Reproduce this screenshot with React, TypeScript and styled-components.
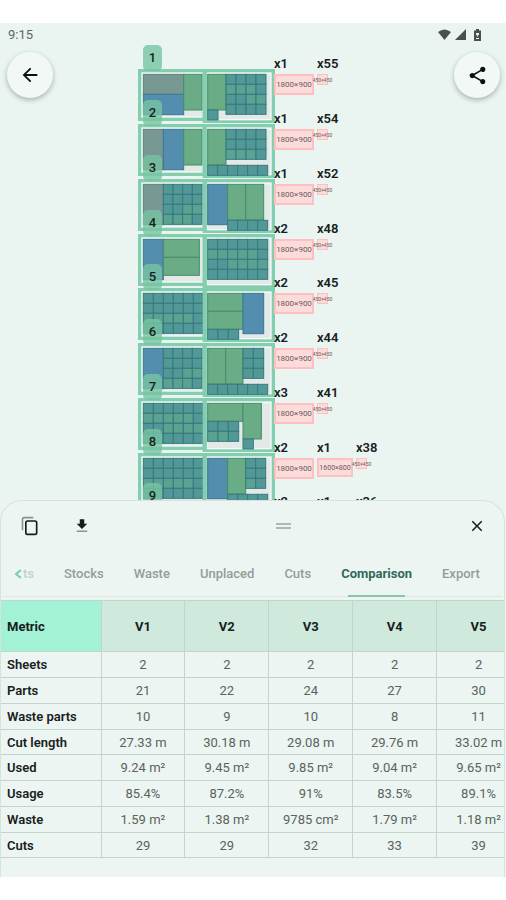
import React from "react";
import styled, { createGlobalStyle } from "styled-components";
import { MdArrowBack, MdClose, MdShare } from "react-icons/md";

const GlobalStyle = createGlobalStyle`
  * { box-sizing: border-box; }
  body { margin: 0; background: #ffffff; }
  button { font: inherit; border: 0; padding: 0; background: none; color: inherit; cursor: pointer; }
`;

const Page = styled.div`
  height: 100vh;
  padding: 23px 0;
  font-family: Roboto, "Liberation Sans", sans-serif;
  font-size: 13px;
  color: #17211d;
`;

const Screen = styled.main`
  height: 100%;
  display: flex;
  flex-direction: column;
  background: #eaf4f0;
  overflow: hidden;
`;

const Workspace = styled.section`
  flex: 1;
  min-height: 0;
  overflow: hidden;
`;

const StatusBar = styled.div`
  display: flex;
  justify-content: space-between;
  align-items: center;
  height: 23px;
  padding: 0 23px 0 8px;
  color: #5f6764;
`;

const StatusIcons = styled.div`
  display: flex;
  align-items: center;
  gap: 4px;
  color: #4b504e;
`;

const Board = styled.div`
  display: grid;
  grid-template-columns: 1fr 230px 1fr;
  align-items: start;
  padding-top: 11px;
`;

const RoundButton = styled.button<{ $end?: boolean }>`
  display: flex;
  align-items: center;
  justify-content: center;
  justify-self: ${(p) => (p.$end ? "end" : "start")};
  width: 46px;
  height: 46px;
  margin: -5px 6px 0 7px;
  border-radius: 50%;
  background: #f2f8f5;
  color: #0b0f0d;
  box-shadow: 0 2px 5px rgba(40, 60, 50, 0.35);
`;

const VariantList = styled.ol`
  list-style: none;
  margin: 0;
  padding: 0;
`;

const Variant = styled.li`
  position: relative;
  display: flex;
  align-items: flex-start;
  height: 55px;
  &:nth-child(4n) { height: 54px; }
`;

const Badge = styled.span`
  position: absolute;
  left: 5px;
  top: -12px;
  width: 19px;
  height: 26px;
  border-radius: 5px;
  background: rgba(119, 196, 162, 0.8);
  line-height: 26px;
  text-align: center;
  font-weight: 500;
`;

const Sheets = styled.svg`
  flex: none;
  display: block;
  width: 137px;
  height: 54px;
  margin-top: 12px;
`;

const Offcuts = styled.div`
  position: relative;
  display: flex;
  gap: 3px;
  margin-left: -1px;
`;

type Size = "large" | "medium" | "small";
const offcutSizes = {
  large: { w: 40, h: 21, font: 8 },
  medium: { w: 36, h: 19, font: 7 },
  small: { w: 11, h: 11, font: 5 },
};

const Offcut = styled.div<{ $size: Size }>`
  width: ${(p) => offcutSizes[p.$size].w}px;
  white-space: nowrap;
`;

const Count = styled.div`
  height: 13px;
  margin-bottom: 4px;
  line-height: 13px;
  font-weight: 600;
`;

const Piece = styled.div<{ $size: Size }>`
  display: flex;
  align-items: center;
  justify-content: center;
  height: ${(p) => offcutSizes[p.$size].h}px;
  border: ${(p) => (p.$size === "small" ? 1 : 2)}px solid #fdbfc0;
  background: #fbdcda;
  color: #6d5a5a;
  font-size: ${(p) => offcutSizes[p.$size].font}px;
`;

const Sheet = styled.section`
  position: relative;
  flex: none;
  margin: 0 1px 0 0;
  padding-bottom: 19px;
  border: 1px solid #d5e3dd;
  border-bottom: 0;
  border-radius: 22px 22px 0 0;
  background: #ecf5f1;
  overflow: hidden;
`;

const Toolbar = styled.div`
  display: grid;
  grid-template-columns: 1fr auto 1fr;
  align-items: center;
  height: 50px;
  padding: 0 17px 0 19px;
`;

const ToolGroup = styled.div<{ $end?: boolean }>`
  display: flex;
  gap: 32px;
  justify-content: ${(p) => (p.$end ? "flex-end" : "flex-start")};
`;

const ToolButton = styled.button`
  display: flex;
  align-items: center;
  justify-content: center;
  width: 20px;
  height: 20px;
  color: #161c19;
`;

const Handle = styled.div`
  width: 15px;
  height: 6px;
  margin-left: 60px;
  border: solid #aeb8b4;
  border-width: 2px 0;
`;

const Tabs = styled.nav`
  display: flex;
  gap: 30px;
  height: 46px;
  padding-left: 11px;
  margin: 0 2px;
  border-bottom: 1px solid #dae6e1;
  white-space: nowrap;
`;

const Tab = styled.button<{ $active?: boolean }>`
  position: relative;
  height: 46px;
  padding-bottom: 1px;
  font-weight: ${(p) => (p.$active ? 700 : 500)};
  color: ${(p) => (p.$active ? "#30695a" : "#929d99")};
  &::after {
    content: "";
    display: ${(p) => (p.$active ? "block" : "none")};
    position: absolute;
    left: 7px;
    right: 7px;
    bottom: 0;
    height: 2px;
    background: #83c8ac;
  }
`;

const ScrollTab = styled(Tab)`
  display: flex;
  align-items: center;
  gap: 1px;
  width: 20px;
  color: #c0d3cb;
`;

const TableWrap = styled.div`
  margin-top: 3px;
  overflow: hidden;
`;

const Table = styled.table`
  width: calc(100% + 17px);
  table-layout: fixed;
  border-collapse: collapse;
  thead tr { height: 51px; }
  tbody tr { height: 26px; }
  tbody tr:nth-child(4n) { height: 25px; }
  th, td {
    padding: 0;
    border: 1px solid #c2d4cc;
    text-align: center;
    line-height: 15px;
    white-space: nowrap;
  }
  th:first-child, td:first-child { border-left: 0; }
`;

const MetricCol = styled.col`
  width: 100px;
`;

const HeadCell = styled.th<{ $metric?: boolean }>`
  background: ${(p) => (p.$metric ? "#a3f2d5" : "#cfe9dc")};
  font-weight: 700;
  && {
    text-align: ${(p) => (p.$metric ? "left" : "center")};
    padding-left: ${(p) => (p.$metric ? 6 : 0)}px;
  }
`;

const RowLabel = styled.th`
  font-weight: 600;
  && {
    text-align: left;
    padding-left: 6px;
  }
`;

const Value = styled.td`
  color: #59635f;
`;

/* Cutting layouts. Shapes are [kind, x, y, width, height]; grids are ["t", x, y, columns, rows, cell width]. */
type Shape = ["a" | "b" | "g", number, number, number, number] | ["t", number, number, number, number, number];
const tones = { a: "#789893", b: "#538eae", g: "#69ac85" };
const edges = { a: "#5d7f7c", b: "#3b7796", g: "#478d6d" };
const full: Shape = ["t", 16, 16, 6, 4, 30];
const layouts: Shape[][] = [
  [["a", 16, 16, 121, 60], ["b", 16, 76, 121, 61], ["g", 137, 16, 55, 107], ["g", 209, 16, 55, 107], ["t", 264, 16, 4, 4, 30], ["t", 209, 123, 1, 1, 31]],
  [["a", 16, 16, 60, 121], ["b", 76, 16, 61, 121], ["g", 137, 16, 55, 107], ["g", 209, 16, 55, 107], ["t", 264, 16, 4, 3, 30], ["t", 209, 124, 6, 1, 30]],
  [["a", 16, 16, 60, 121], ["t", 76, 16, 4, 4, 29], ["b", 209, 16, 60, 121], ["g", 269, 16, 54, 107], ["g", 323, 16, 54, 107], ["t", 269, 124, 4, 1, 30]],
  [["b", 16, 16, 60, 121], ["g", 76, 16, 108, 54], ["g", 76, 70, 108, 54], ["t", 209, 16, 6, 4, 30]],
  [full, ["g", 209, 16, 106, 54], ["g", 209, 70, 106, 54], ["b", 315, 16, 62, 121], ["t", 209, 124, 3, 1, 31]],
  [["b", 16, 16, 60, 121], ["t", 76, 16, 4, 4, 29], ["g", 209, 16, 54, 107], ["g", 263, 16, 52, 107], ["t", 315, 16, 2, 3, 31], ["t", 209, 124, 6, 1, 30]],
  [full, ["g", 209, 16, 106, 54], ["g", 315, 16, 55, 107], ["t", 209, 70, 3, 2, 31], ["t", 315, 123, 1, 1, 31]],
  [full, ["b", 209, 16, 60, 121], ["g", 269, 16, 54, 107], ["t", 323, 16, 2, 3, 30], ["t", 269, 124, 4, 1, 30]],
];

function Shapes({ shape, seed }: { shape: Shape; seed: number }) {
  if (shape[0] !== "t") {
    const [kind, x, y, w, h] = shape;
    return <rect x={x} y={y} width={w} height={h} fill={tones[kind]} stroke={edges[kind]} strokeWidth={3} />;
  }
  const [, x, y, cols, rows, cell] = shape;
  const cells = [];
  for (let r = 0; r < rows; r++) {
    for (let c = 0; c < cols; c++) {
      const light = rows > 1 && (r === (seed % 3) + 1 ? c < cols - 1 : r === 2 && c > 1);
      cells.push(
        <rect key={`${r}-${c}`} x={x + c * cell} y={y + r * 30} width={cell} height={30}
          fill={light ? "#5ba291" : "#519897"} stroke="#36797f" strokeWidth={3} />
      );
    }
  }
  return <>{cells}</>;
}

function Layout({ index }: { index: number }) {
  return (
    <Sheets viewBox="0 0 411 162" preserveAspectRatio="none" aria-hidden="true">
      <rect x={0} y={0} width={200} height={156} fill="#82ceae" />
      <rect x={200} y={0} width={211} height={162} fill="#82ceae" />
      <rect x={10} y={10} width={184} height={136} fill="#f2faf6" />
      <rect x={206} y={10} width={195} height={144} fill="#f2faf6" />
      <rect x={16} y={16} width={176} height={126} fill="#e2e9e6" />
      <rect x={209} y={16} width={188} height={134} fill="#e2e9e6" />
      {(layouts[index] ?? []).map((s, i) => <Shapes key={i} shape={s} seed={index} />)}
      <rect x={194} y={0} width={12} height={162} fill="#82ceae" />
    </Sheets>
  );
}

const counts = [
  ["x1", "x55"], ["x1", "x54"], ["x1", "x52"], ["x2", "x48"], ["x2", "x45"],
  ["x2", "x44"], ["x3", "x41"], ["x2", "x1", "x38"], ["x2", "x1", "x36"],
];

function offcutSize(i: number, total: number): Size {
  if (i === 0) return "large";
  return i === total - 1 ? "small" : "medium";
}
const dimensions = { large: "1800×900", medium: "1600×800", small: "450×450" };

const tabs = ["Stocks", "Waste", "Unplaced", "Cuts", "Comparison", "Export"];
const versions = ["V1", "V2", "V3", "V4", "V5"];
const metrics: [string, string[]][] = [
  ["Sheets", ["2", "2", "2", "2", "2"]],
  ["Parts", ["21", "22", "24", "27", "30"]],
  ["Waste parts", ["10", "9", "10", "8", "11"]],
  ["Cut length", ["27.33 m", "30.18 m", "29.08 m", "29.76 m", "33.02 m"]],
  ["Used", ["9.24 m²", "9.45 m²", "9.85 m²", "9.04 m²", "9.65 m²"]],
  ["Usage", ["85.4%", "87.2%", "91%", "83.5%", "89.1%"]],
  ["Waste", ["1.59 m²", "1.38 m²", "9785 cm²", "1.79 m²", "1.18 m²"]],
  ["Cuts", ["29", "29", "32", "33", "39"]],
];

export default function App() {
  return (
    <Page>
      <GlobalStyle />
      <Screen>
        <Workspace>
          <StatusBar>
            <span>9:15</span>
            <StatusIcons>
              <svg width="13" height="11" viewBox="0 0 13 11"><path d="M0 3Q6.500-2 13 3L6.500 11Z" fill="currentColor" /></svg>
              <svg width="11" height="11" viewBox="0 0 11 11"><path d="M11 0V11H0Z" fill="currentColor" /></svg>
              <svg width="13" height="12" viewBox="-3 0 13 12">
                <path d="M3 0h3v1.500h2V12H1V1.500H3Z" fill="currentColor" />
                <path d="M3 4h3v1.500L5 6.500v1H4v-1L3 5.500ZM3 9h3v1H3Z" fill="#eaf4f0" />
              </svg>
            </StatusIcons>
          </StatusBar>
          <Board>
            <RoundButton aria-label="Back"><MdArrowBack size={22} /></RoundButton>
            <VariantList>
              {counts.map((row, i) => (
                <Variant key={i}>
                  <Layout index={i} />
                  <Badge>{i + 1}</Badge>
                  <Offcuts>
                    {row.map((count, j) => {
                      const size = offcutSize(j, row.length);
                      return (
                        <Offcut key={j} $size={size}>
                          <Count>{count}</Count>
                          <Piece $size={size}>{dimensions[size]}</Piece>
                        </Offcut>
                      );
                    })}
                  </Offcuts>
                </Variant>
              ))}
            </VariantList>
            <RoundButton $end aria-label="Share"><MdShare size={21} /></RoundButton>
          </Board>
        </Workspace>
        <Sheet>
          <Toolbar>
            <ToolGroup>
              <ToolButton aria-label="Copy">
                <svg width="20" height="20" viewBox="0 0 24 24" fill="none" strokeWidth="2">
                  <path d="M3 17V4q0-2 2-2h11" stroke="#8b9490" />
                  <rect x="7" y="6" width="13" height="16" rx="2" stroke="currentColor" />
                </svg>
              </ToolButton>
              <ToolButton aria-label="Download">
                <svg width="18" height="20" viewBox="0 0 24 24">
                  <path d="M9 3h6v6h4l-7 7-7-7h4Z" fill="currentColor" />
                  <path d="M5 18h14v2H5Z" fill="#8b9490" />
                </svg>
              </ToolButton>
            </ToolGroup>
            <Handle />
            <ToolGroup $end>
              <ToolButton aria-label="Close"><MdClose size={18} /></ToolButton>
            </ToolGroup>
          </Toolbar>
          <Tabs>
            <ScrollTab aria-label="Parts">
              <svg width="8" height="10" viewBox="0 0 8 10" fill="none"><path d="M7 1 2 5l5 4" stroke="#7ccbab" strokeWidth="2" /></svg>
              ts
            </ScrollTab>
            {tabs.map((t) => <Tab key={t} $active={t === "Comparison"}>{t}</Tab>)}
          </Tabs>
          <TableWrap>
            <Table>
              <colgroup>
                <MetricCol />
                {versions.map((v) => <col key={v} />)}
              </colgroup>
              <thead>
                <tr>
                  <HeadCell $metric scope="col">Metric</HeadCell>
                  {versions.map((v) => <HeadCell key={v} scope="col">{v}</HeadCell>)}
                </tr>
              </thead>
              <tbody>
                {metrics.map(([name, values]) => (
                  <tr key={name}>
                    <RowLabel scope="row">{name}</RowLabel>
                    {values.map((v, i) => <Value key={i}>{v}</Value>)}
                  </tr>
                ))}
              </tbody>
            </Table>
          </TableWrap>
        </Sheet>
      </Screen>
    </Page>
  );
}
